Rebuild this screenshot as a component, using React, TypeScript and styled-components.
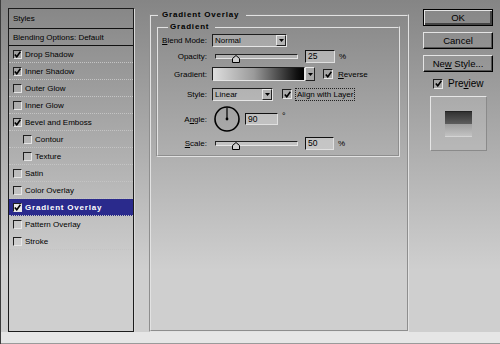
import React from "react";
import styled, { createGlobalStyle } from "styled-components";

const GlobalStyle = createGlobalStyle`
  html, body { margin: 0; padding: 0; }
  body { font-family: "Liberation Sans", Arial, sans-serif; }
`;

type Effect = { name: string; checked: boolean; indent?: boolean; active?: boolean };

const effects: Effect[] = [
  { name: "Drop Shadow", checked: true },
  { name: "Inner Shadow", checked: true },
  { name: "Outer Glow", checked: false },
  { name: "Inner Glow", checked: false },
  { name: "Bevel and Emboss", checked: true },
  { name: "Contour", checked: false, indent: true },
  { name: "Texture", checked: false, indent: true },
  { name: "Satin", checked: false },
  { name: "Color Overlay", checked: false },
  { name: "Gradient Overlay", checked: true, active: true },
  { name: "Pattern Overlay", checked: false },
  { name: "Stroke", checked: false },
];

const Tick = () => (
  <svg width="7" height="7" viewBox="0 0 7 7">
    <path d="M0.8 3.4 L2.8 5.8 L6.4 0.8" fill="none" stroke="#000" strokeWidth="1.6" />
  </svg>
);

const CheckBox = ({ checked, light, size = 9 }: { checked: boolean; light?: boolean; size?: number }) => (
  <Box $light={light} $size={size}>{checked && <Tick />}</Box>
);

const Arrow = () => (
  <svg width="5" height="3" viewBox="0 0 5 3">
    <path d="M0 0 H5 L2.5 3 Z" fill="#000" />
  </svg>
);

const Select = ({ value, width }: { value: string; width: number }) => (
  <SelectBox style={{ width }}>
    <SelectText>{value}</SelectText>
    <DropButton><Arrow /></DropButton>
  </SelectBox>
);

const Slider = ({ pos }: { pos: number }) => (
  <SliderBox>
    <Track />
    <Thumb style={{ left: 3 + pos * 83 - 4 }}>
      <svg width="8" height="8" viewBox="0 0 8 8">
        <path d="M0.5 3.5 L4 0.5 L7.5 3.5 V7.5 H0.5 Z" fill="#cfcfcf" stroke="#000" strokeWidth="1" />
      </svg>
    </Thumb>
  </SliderBox>
);

const Dial = () => (
  <DialBox>
    <svg width="26" height="26" viewBox="0 0 26 26">
      <circle cx="13" cy="13" r="12" fill="none" stroke="#000" strokeWidth="1.6" />
      <line x1="13" y1="13" x2="13" y2="1.5" stroke="#000" strokeWidth="1.2" />
      <circle cx="13" cy="13" r="1.4" fill="#000" />
    </svg>
  </DialBox>
);

export default function App() {
  return (
    <>
      <GlobalStyle />
      <Window>
        <Main>
          <StylesPanel>
            <PanelTitle>Styles</PanelTitle>
            <BlendingRow>Blending Options: Default</BlendingRow>
            {effects.map((e) => (
              <EffectRow key={e.name} $indent={e.indent} $active={e.active}>
                <CheckBox checked={e.checked} light={e.active} />
                <span>{e.name}</span>
              </EffectRow>
            ))}
          </StylesPanel>

          <OuterFrame>
            <OuterLegend>Gradient Overlay</OuterLegend>
            <InnerFrame>
              <InnerLegend>Gradient</InnerLegend>

              <FieldRow $h={13} $mt={2}>
                <FieldLabel><u>B</u>lend Mode:</FieldLabel>
                <Select value="Normal" width={75} />
              </FieldRow>

              <FieldRow $h={13} $mt={3}>
                <FieldLabel>Opacity:</FieldLabel>
                <Slider pos={0.25} />
                <TextBox $w={30}>25</TextBox>
                <Unit>%</Unit>
              </FieldRow>

              <FieldRow $h={14} $mt={4}>
                <FieldLabel>Gradient:</FieldLabel>
                <GradientBar />
                <SideButton><Arrow /></SideButton>
                <CheckGap $ml={8}>
                  <CheckBox checked size={10} />
                </CheckGap>
                <OptionText><u>R</u>everse</OptionText>
              </FieldRow>

              <FieldRow $h={12} $mt={7}>
                <FieldLabel>Style:</FieldLabel>
                <Select value="Linear" width={61} />
                <CheckGap $ml={9}>
                  <CheckBox checked size={10} />
                </CheckGap>
                <FocusLabel>Align with Layer</FocusLabel>
              </FieldRow>

              <FieldRow $h={26} $mt={6}>
                <FieldLabel>A<u>n</u>gle:</FieldLabel>
                <Dial />
                <TextBox $w={33} $h={12} $top>90</TextBox>
                <Degree>°</Degree>
              </FieldRow>

              <FieldRow $h={13} $mt={5}>
                <FieldLabel><u>S</u>cale:</FieldLabel>
                <Slider pos={0.25} />
                <TextBox $w={29}>50</TextBox>
                <Unit>%</Unit>
              </FieldRow>
            </InnerFrame>
          </OuterFrame>

          <ButtonColumn>
            <Button $default><span>OK</span></Button>
            <Button><span>Cancel</span></Button>
            <Button><span>Ne<u>w</u> Style...</span></Button>
            <PreviewRow>
              <CheckBox checked size={10} />
              <span>Pre<u>v</u>iew</span>
            </PreviewRow>
            <PreviewBox>
              <Swatch />
            </PreviewBox>
          </ButtonColumn>
        </Main>
        <BottomStrip />
      </Window>
    </>
  );
}

const Window = styled.div`
  width: 500px;
  height: 344px;
  box-sizing: border-box;
  display: flex;
  flex-direction: column;
  overflow: hidden;
  background: linear-gradient(180deg, #858585 0px, #cfcfcf 270px, #cfcfcf 100%);
  border-left: 1px solid #3c3c3c;
  font-size: 8px;
  color: #000;
`;

const Main = styled.div`
  flex: 1;
  min-height: 0;
  display: flex;
  align-items: flex-start;
  padding: 8px 0 0 7px;
`;

const StylesPanel = styled.div`
  width: 126px;
  height: 324px;
  box-sizing: border-box;
  display: flex;
  flex-direction: column;
  border: 1px solid #1c1c1c;
  box-shadow: 1px 1px 0 #d8d8d8;
  flex: none;
`;

const PanelTitle = styled.div`
  height: 19px;
  display: flex;
  align-items: center;
  padding-left: 4px;
  border-bottom: 1px solid #111;
`;

const BlendingRow = styled.div`
  height: 16px;
  display: flex;
  align-items: center;
  padding-left: 4px;
  border-bottom: 1px solid #111;
`;

const EffectRow = styled.div<{ $indent?: boolean; $active?: boolean }>`
  height: 16px;
  display: flex;
  align-items: center;
  gap: 3px;
  padding-left: ${(p) => (p.$indent ? 14 : 4)}px;
  border-bottom: 1px dotted #c4c4c4;
  background: ${(p) => (p.$active ? "#2a2a8c" : "transparent")};
  color: ${(p) => (p.$active ? "#fff" : "#000")};
  font-weight: ${(p) => (p.$active ? "bold" : "normal")};
  letter-spacing: ${(p) => (p.$active ? "0.8px" : "0")};
`;

const Box = styled.span<{ $light?: boolean; $size: number }>`
  width: ${(p) => p.$size}px;
  height: ${(p) => p.$size}px;
  box-sizing: border-box;
  flex: none;
  display: inline-flex;
  align-items: center;
  justify-content: center;
  border-style: solid;
  border-width: 1px;
  border-color: #1e1e1e #e6e6e6 #e6e6e6 #1e1e1e;
  background: ${(p) => (p.$light ? "#e8e8e8" : "rgba(255,255,255,0.12)")};
`;

const OuterFrame = styled.fieldset`
  margin: 2px 0 0 15px;
  padding: 0;
  width: 260px;
  height: 322px;
  box-sizing: border-box;
  border: 2px groove #e2e2e2;
  min-inline-size: 0;
  flex: none;
`;

const OuterLegend = styled.legend`
  margin-left: 7px;
  padding: 0 7px 0 4px;
  font-weight: bold;
  letter-spacing: 0.8px;
  line-height: 10px;
`;

const InnerFrame = styled.fieldset`
  margin: 2px 7px 0 5px;
  padding: 0 0 5px 0;
  border: 2px groove #e2e2e2;
  min-inline-size: 0;
  display: flex;
  flex-direction: column;
`;

const InnerLegend = styled.legend`
  margin-left: 10px;
  padding: 0 6px 0 2px;
  font-weight: bold;
  letter-spacing: 0.8px;
  line-height: 10px;
`;

const FieldRow = styled.div<{ $h: number; $mt: number }>`
  display: flex;
  align-items: center;
  height: ${(p) => p.$h}px;
  margin-top: ${(p) => p.$mt}px;
`;

const FieldLabel = styled.span`
  width: 49px;
  margin-right: 5px;
  text-align: right;
  flex: none;
  white-space: nowrap;
`;

const SelectBox = styled.div`
  height: 13px;
  box-sizing: border-box;
  display: flex;
  align-items: stretch;
  border-style: solid;
  border-width: 1px;
  border-color: #1e1e1e #e6e6e6 #e6e6e6 #1e1e1e;
  background: rgba(255, 255, 255, 0.22);
`;

const SelectText = styled.span`
  flex: 1;
  padding-left: 2px;
  line-height: 11px;
`;

const DropButton = styled.span`
  width: 10px;
  box-sizing: border-box;
  display: flex;
  align-items: center;
  justify-content: center;
  border-style: solid;
  border-width: 1px;
  border-color: #e8e8e8 #222 #222 #e8e8e8;
  background: #b4b4b4;
`;

const SliderBox = styled.div`
  position: relative;
  width: 88px;
  height: 13px;
  display: flex;
  align-items: center;
  padding: 0 2px 0 3px;
  box-sizing: border-box;
  flex: none;
`;

const Track = styled.div`
  flex: 1;
  height: 5px;
  box-sizing: border-box;
  border-style: solid;
  border-width: 1px;
  border-color: #222 #e6e6e6 #e6e6e6 #222;
  background: rgba(255, 255, 255, 0.28);
`;

const Thumb = styled.div`
  position: absolute;
  top: 5px;
  width: 8px;
  height: 8px;
  display: flex;
`;

const TextBox = styled.div<{ $w: number; $h?: number; $top?: boolean }>`
  width: ${(p) => p.$w}px;
  height: ${(p) => p.$h ?? 13}px;
  box-sizing: border-box;
  margin-left: 5px;
  align-self: ${(p) => (p.$top ? "flex-start" : "center")};
  margin-top: ${(p) => (p.$top ? 7 : 0)}px;
  padding-left: 2px;
  line-height: ${(p) => (p.$h ?? 13) - 2}px;
  font-size: 8.5px;
  border-style: solid;
  border-width: 1px;
  border-color: #111 #e0e0e0 #e0e0e0 #111;
  background: rgba(255, 255, 255, 0.3);
  flex: none;
`;

const Unit = styled.span`
  margin-left: 4px;
`;

const Degree = styled.span`
  align-self: flex-start;
  margin: 5px 0 0 4px;
  font-size: 9px;
`;

const GradientBar = styled.div`
  width: 93px;
  height: 14px;
  box-sizing: border-box;
  flex: none;
  border-style: solid;
  border-width: 1px;
  border-color: #1e1e1e #e6e6e6 #e6e6e6 #1e1e1e;
  background: linear-gradient(90deg, #dedede 0%, #9a9a9a 45%, #111 92%, #000 100%);
`;

const SideButton = styled.span`
  width: 10px;
  height: 14px;
  box-sizing: border-box;
  flex: none;
  display: flex;
  align-items: center;
  justify-content: center;
  border-style: solid;
  border-width: 1px;
  border-color: #e8e8e8 #222 #222 #e8e8e8;
  background: #a8a8a8;
`;

const CheckGap = styled.span<{ $ml: number }>`
  display: flex;
  margin-left: ${(p) => p.$ml}px;
`;

const OptionText = styled.span`
  margin-left: 5px;
`;

const FocusLabel = styled.span`
  margin-left: 3px;
  padding: 0 1px;
  line-height: 11px;
  border: 1px dotted #222;
  white-space: nowrap;
`;

const DialBox = styled.div`
  margin-left: 2px;
  display: flex;
  flex: none;
`;

const ButtonColumn = styled.div`
  width: 70px;
  margin: 1px 0 0 14px;
  display: flex;
  flex-direction: column;
  gap: 6px;
  flex: none;
`;

const Button = styled.div<{ $default?: boolean }>`
  height: 17px;
  box-sizing: border-box;
  display: flex;
  align-items: center;
  justify-content: center;
  font-size: 9.5px;
  white-space: nowrap;
  border-style: solid;
  border-width: 1px;
  border-color: ${(p) => (p.$default ? "#000" : "#e4e4e4 #000 #000 #e4e4e4")};
  box-shadow: ${(p) =>
    p.$default
      ? "inset 1px 1px 0 #e4e4e4, inset -2px -2px 0 #444"
      : "inset -1px -1px 0 #555"};
`;

const PreviewRow = styled.div`
  display: flex;
  align-items: center;
  gap: 5px;
  margin: 0 0 0 10px;
  height: 11px;
  font-size: 10px;
`;

const PreviewBox = styled.div`
  width: 57px;
  height: 55px;
  box-sizing: border-box;
  align-self: center;
  margin-top: 1px;
  display: flex;
  align-items: center;
  justify-content: center;
  border-style: solid;
  border-width: 1px;
  border-color: #e6e6e6 #8a8a8a #8a8a8a #e6e6e6;
  background: rgba(255, 255, 255, 0.12);
`;

const Swatch = styled.div`
  width: 27px;
  height: 26px;
  box-sizing: border-box;
  border-top: 1px solid #222;
  border-bottom: 1px solid #d4d4d4;
  background: linear-gradient(180deg, #323232 0%, #5e5e5e 50%, #9e9e9e 50%, #c2c2c2 100%);
`;

const BottomStrip = styled.div`
  height: 12px;
  flex: none;
  box-sizing: border-box;
  background: #e6e6e6;
  border-bottom: 1px solid #9a9a9a;
`;
